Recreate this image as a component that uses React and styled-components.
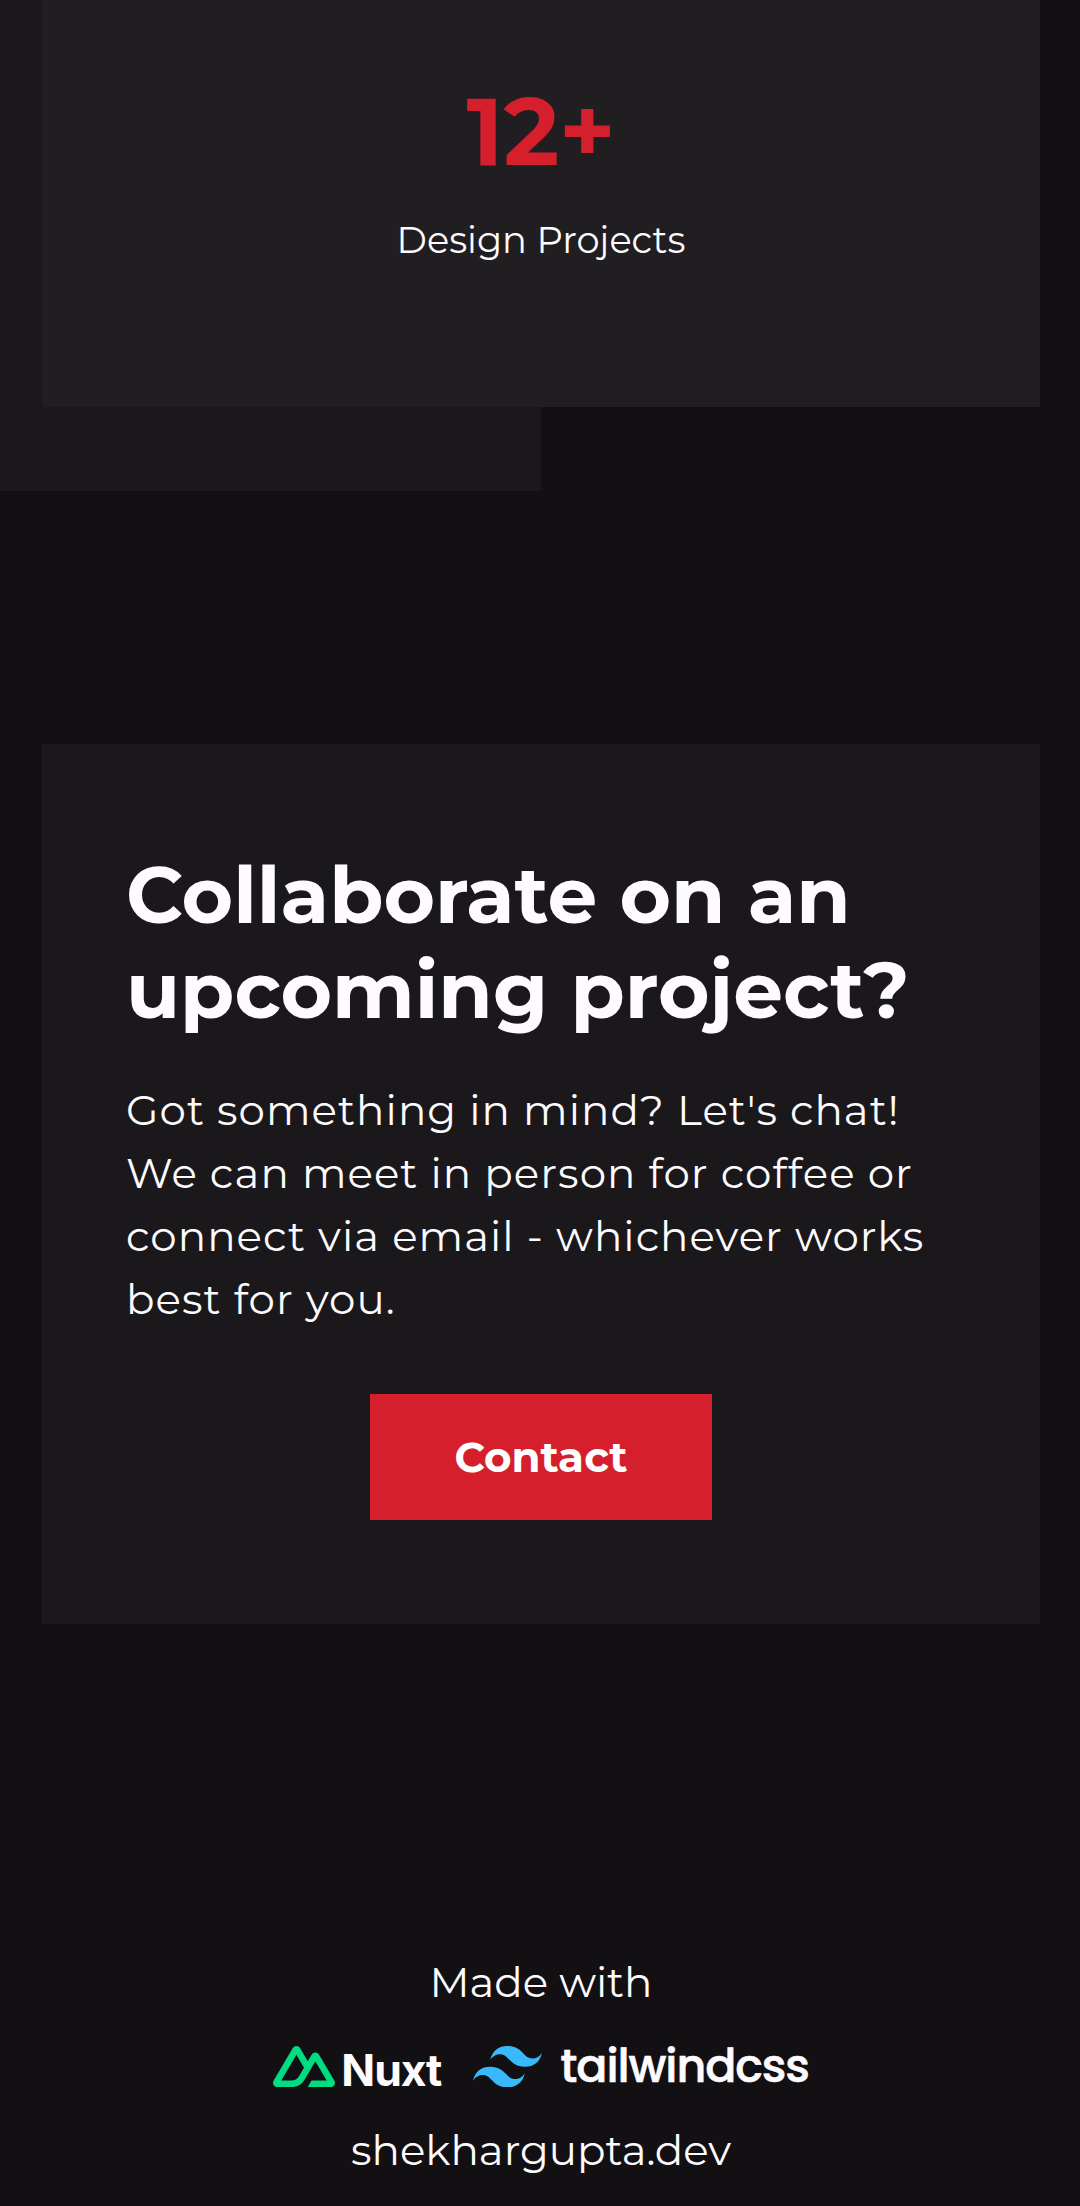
import React from "react"
import styled, { createGlobalStyle } from "styled-components"

const GlobalStyle = createGlobalStyle`
  body {
    margin: 0;
    background-color: #121013;
    color: #fdfbfe;
    font-family: Montserrat, Inter, sans-serif;
    overflow: hidden;
  }
`

const Container = styled.div`
  width: 1082px;
  height: 2206px;
  overflow: hidden;
`

const Stats = styled.section`
  padding: 0 42px 84px;
  background: linear-gradient(to right, #1a181b 50%, transparent 50%);
`

const StatCard = styled.div`
  height: 407px;
  padding-top: 85px;
  box-sizing: border-box;
  background-color: #201e21;
  text-align: center;
`

const StatNumber = styled.div`
  color: #d61f2c;
  font-size: 94.5px;
  line-height: 94.5px;
  font-weight: 700;
  margin-bottom: 34px;
`

const StatLabel = styled.div`
  font-size: 36.75px;
  line-height: 52.5px;
`

const Collaborate = styled.section`
  margin: 253px 42px 0;
  padding: 104px 84px;
  background-color: #1a181b;
`

const Title = styled.h2`
  margin: 0 0 42px;
  font-size: 78.75px;
  line-height: 94.5px;
  font-weight: 700;
`

const Desc = styled.p`
  margin: 0 0 63px;
  font-size: 42px;
  line-height: 63px;
  letter-spacing: 1.05px;
`

const Button = styled.button`
  display: block;
  height: 126px;
  margin: 0 auto;
  padding: 0 84px;
  border: none;
  background-color: #d61f2c;
  color: white;
  font-family: inherit;
  font-size: 42px;
  font-weight: 700;
  cursor: pointer;
`

const Footer = styled.footer`
  margin-top: 327px;
  text-align: center;
`

const FooterText = styled.div`
  font-size: 42px;
  line-height: 63px;
`

const Logos = styled.div`
  display: flex;
  justify-content: center;
  gap: 32px;
  height: 105px;
  padding-top: 32px;
  box-sizing: border-box;
`

const Logo = styled.div`
  display: flex;
  align-items: flex-start;
  gap: ${props => props.$gap}px;
`

const LogoName = styled.span`
  font-family: ${props => props.$font}, Inter, sans-serif;
  font-size: ${props => props.$size}px;
  line-height: ${props => props.$line}px;
  font-weight: ${props => props.$weight};
  letter-spacing: ${props => props.$spacing}px;
  -webkit-text-stroke: ${props => props.$stroke || 0}px currentColor;
`

const NuxtMark = () => (
  <svg width="62" height="41" viewBox="0 4.17 24 15.66" preserveAspectRatio="none" fill="#00dc82">
    <path d="M13.4642 19.8295h8.9218c.2834 0 .5618-.0723.8072-.2098a1.5899 1.5899 0 0 0 .5908-.5732 1.5293 1.5293 0 0 0 .216-.783 1.529 1.529 0 0 0-.2167-.7828L17.7916 7.4142a1.59 1.59 0 0 0-.5907-.573 1.6524 1.6524 0 0 0-.807-.2099c-.2833 0-.5616.0724-.807.2098a1.59 1.59 0 0 0-.5907.5731L13.4642 9.99l-2.9954-5.0366a1.5913 1.5913 0 0 0-.591-.573 1.6533 1.6533 0 0 0-.8071-.2098c-.2834 0-.5617.0723-.8072.2097a1.5913 1.5913 0 0 0-.591.573L.2168 17.4808A1.5292 1.5292 0 0 0 0 18.2635c-.0001.2749.0744.545.216.783a1.59 1.59 0 0 0 .5908.5732c.2454.1375.5238.2098.8072.2098h5.6003c2.219 0 3.8554-.9454 4.9813-2.7899l2.7337-4.5922 1.4643-2.4598 4.3943 7.3824h-5.8586zM7.123 17.3694l-3.9083-.0009 5.8586-9.8421 2.9232 4.921-1.9572 3.2892c-.7478 1.1967-1.5972 1.6328-2.9163 1.6328z" />
  </svg>
)

const TailwindMark = () => (
  <svg width="69" height="41.4" viewBox="0 0 54 32.4" fill="#38b9fb">
    <path d="M27 0c-7.2 0-11.7 3.6-13.5 10.8 2.7-3.6 5.85-4.95 9.45-4.05 2.054.513 3.522 2.004 5.147 3.653C30.744 13.09 33.808 16.2 40.5 16.2c7.2 0 11.7-3.6 13.5-10.8-2.7 3.6-5.85 4.95-9.45 4.05-2.054-.513-3.522-2.004-5.147-3.653C36.756 3.11 33.692 0 27 0z" />
    <path d="M13.5 16.2C6.3 16.2 1.8 19.8 0 27c2.7-3.6 5.85-4.95 9.45-4.05 2.054.514 3.522 2.004 5.147 3.653C17.244 29.29 20.308 32.4 27 32.4c7.2 0 11.7-3.6 13.5-10.8-2.7 3.6-5.85 4.95-9.45 4.05-2.054-.513-3.522-2.004-5.147-3.653C23.256 19.31 20.192 16.2 13.5 16.2z" />
  </svg>
)

const App = () => {
  return (
    <Container>
      <GlobalStyle />
      <Stats>
        <StatCard>
          <StatNumber>12+</StatNumber>
          <StatLabel>Design Projects</StatLabel>
        </StatCard>
      </Stats>
      <Collaborate>
        <Title>Collaborate on an upcoming project?</Title>
        <Desc>
          Got something in mind? Let's chat! We can meet in person for coffee
          or connect via email - whichever works best for you.
        </Desc>
        <Button>Contact</Button>
      </Collaborate>
      <Footer>
        <FooterText>Made with</FooterText>
        <Logos>
          <Logo $gap={6}>
            <NuxtMark />
            <LogoName $font="Inter" $size={44.5} $line={48} $weight={700} $spacing={-1.1}>Nuxt</LogoName>
          </Logo>
          <Logo $gap={18}>
            <TailwindMark />
            <LogoName $font="Poppins" $size={46} $line={40} $weight={500} $spacing={-1.1} $stroke={0.6}>tailwindcss</LogoName>
          </Logo>
        </Logos>
        <FooterText>shekhargupta.dev</FooterText>
      </Footer>
    </Container>
  )
}

export default App
